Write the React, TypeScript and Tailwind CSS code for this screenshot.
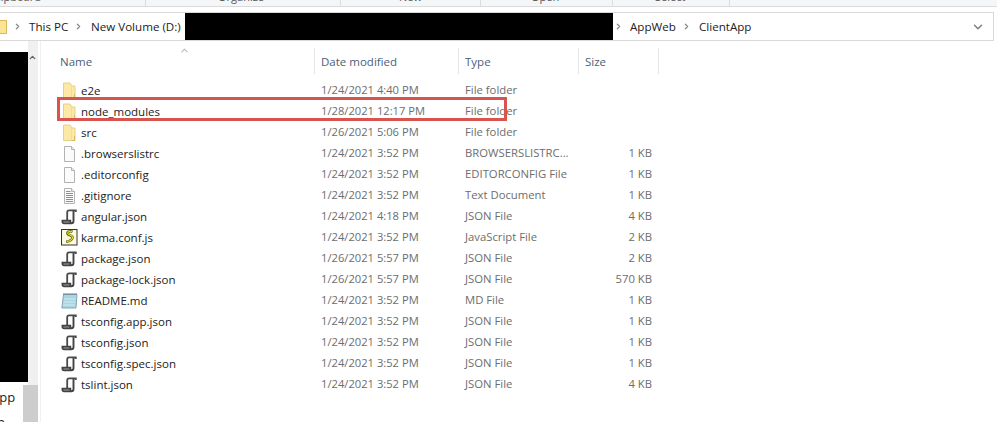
import { ChevronDown, ChevronRight, ChevronUp } from 'lucide-react';

type Kind = 'folder' | 'blank' | 'text' | 'json' | 'js' | 'md';

interface Row {
  name: string;
  date: string;
  type: string;
  size?: string;
  kind: Kind;
}

const rows: Row[] = [
  { name: 'e2e', date: '1/24/2021 4:40 PM', type: 'File folder', kind: 'folder' },
  { name: 'node_modules', date: '1/28/2021 12:17 PM', type: 'File folder', kind: 'folder' },
  { name: 'src', date: '1/26/2021 5:06 PM', type: 'File folder', kind: 'folder' },
  { name: '.browserslistrc', date: '1/24/2021 3:52 PM', type: 'BROWSERSLISTRC...', size: '1 KB', kind: 'blank' },
  { name: '.editorconfig', date: '1/24/2021 3:52 PM', type: 'EDITORCONFIG File', size: '1 KB', kind: 'blank' },
  { name: '.gitignore', date: '1/24/2021 3:52 PM', type: 'Text Document', size: '1 KB', kind: 'text' },
  { name: 'angular.json', date: '1/24/2021 4:18 PM', type: 'JSON File', size: '4 KB', kind: 'json' },
  { name: 'karma.conf.js', date: '1/24/2021 3:52 PM', type: 'JavaScript File', size: '2 KB', kind: 'js' },
  { name: 'package.json', date: '1/26/2021 5:57 PM', type: 'JSON File', size: '2 KB', kind: 'json' },
  { name: 'package-lock.json', date: '1/26/2021 5:57 PM', type: 'JSON File', size: '570 KB', kind: 'json' },
  { name: 'README.md', date: '1/24/2021 3:52 PM', type: 'MD File', size: '1 KB', kind: 'md' },
  { name: 'tsconfig.app.json', date: '1/24/2021 3:52 PM', type: 'JSON File', size: '1 KB', kind: 'json' },
  { name: 'tsconfig.json', date: '1/24/2021 3:52 PM', type: 'JSON File', size: '1 KB', kind: 'json' },
  { name: 'tsconfig.spec.json', date: '1/24/2021 3:52 PM', type: 'JSON File', size: '1 KB', kind: 'json' },
  { name: 'tslint.json', date: '1/24/2021 3:52 PM', type: 'JSON File', size: '4 KB', kind: 'json' },
];

function FileIcon({ kind }: { kind: Kind }) {
  if (kind === 'folder') {
    return (
      <svg width="16" height="17" viewBox="0 0 16 17">
        <path d="M2.500 1h6.500l2 3h3v12.500h-11.500z" fill="#fce9a6" stroke="#e8d08a" />
        <path d="M10.500 4.500v12" stroke="#f3dc92" />
        <path d="M13.500 12v4.500h-3" fill="none" stroke="#dcb95e" />
      </svg>
    );
  }
  if (kind === 'blank' || kind === 'text') {
    return (
      <svg width="16" height="17" viewBox="0 0 16 17">
        <path d="M3.500 1.500h7l3 3v12h-10z" fill="#fbfbfb" stroke="#b3b3b3" />
        <path d="M10.500 1.500v3h3" fill="#ececec" stroke="#b3b3b3" />
        {kind === 'text' && (
          <path d="M5 4.500h4.500M5 6.500h7M5 8.500h7M5 10.500h7M5 12.500h7M5 14.500h7" stroke="#8f8f8f" />
        )}
      </svg>
    );
  }
  if (kind === 'json') {
    return (
      <svg width="16" height="17" viewBox="0 0 16 17">
        <path d="M14.800 4V2.300H8.200C6.800 2.300 6.200 3.200 6.200 4.300V12" fill="none" stroke="#4a4a4a" strokeWidth="1.800" />
        <path d="M12.500 2.800V13C12.500 14.500 11.600 15.300 10.300 15.300H3C2 15.300 1.500 14.600 1.500 13.800V12.700H9.300V14.400" fill="none" stroke="#434343" strokeWidth="1.900" />
      </svg>
    );
  }
  if (kind === 'js') {
    return (
      <svg width="17" height="17" viewBox="0 0 17 17">
        <rect x="0.500" y="0.500" width="15.500" height="15.500" fill="#fbf9df" stroke="#333" />
        <path d="M11.500 2.800c-3-1.300-6 .4-4.800 2.300 1 1.400 4.300 1 4.800 3 .4 2.100-2.200 4.300-6.300 4.700" fill="none" stroke="#5f6a10" strokeWidth="2.600" />
        <path d="M11 2.600c-2.500-1-5 .5-4 2.200 1 1.400 4 1.300 4.500 3.300.4 1.900-2 4-5.500 4.300" fill="none" stroke="#eadf2e" strokeWidth="1.100" />
      </svg>
    );
  }
  return (
    <svg width="17" height="17" viewBox="0 0 17 17">
      <path d="M2.500 2.500h13.500l-1 13.500H0.800z" fill="#a9d5e2" stroke="#7fa9b8" />
      <path d="M3 3.500h12.500M3 7h11.500M2.600 10h11.500M2.200 13h11.500" stroke="#d3ebf1" />
      <path d="M3 1v2.500M5 1v2.500M7 1v2.500M9 1v2.500M11 1v2.500M13 1v2.500M15 1v2.500" stroke="#6d7f88" />
    </svg>
  );
}

function Crumb({ label, className }: { label: string; className?: string }) {
  return (
    <>
      <ChevronRight size={9} strokeWidth={3.5} className="shrink-0 text-[#8c8c8c]" />
      <span className={`whitespace-nowrap text-[11.6px] text-[#222] ${className ?? ''}`}>{label}</span>
    </>
  );
}

function RibbonGroup({ label, width, pad }: { label: string; width: string; pad: string }) {
  return (
    <div className={`h-full shrink-0 overflow-hidden border-r border-[#dcdddd] ${width} ${pad}`}>
      <div className="-mt-[10px] whitespace-nowrap text-[11px] leading-[14px] text-[#555]">{label}</div>
    </div>
  );
}

export default function App() {
  return (
    <div className="relative flex h-[422px] w-[997px] flex-col overflow-hidden bg-white font-['Open_Sans','Liberation_Sans',sans-serif]">
      {/* cropped ribbon */}
      <div className="flex h-[7px] shrink-0 border-b border-[#dadbdc] bg-[#f5f6f7]">
        <RibbonGroup label="Clipboard" width="w-[146px]" pad="-indent-[9px]" />
        <RibbonGroup label="Organize" width="w-[195px]" pad="pl-[72px]" />
        <RibbonGroup label="New" width="w-[140px]" pad="pl-[58px]" />
        <RibbonGroup label="Open" width="w-[132px]" pad="pl-[50px]" />
        <RibbonGroup label="Select" width="w-[117px]" pad="pl-[42px]" />
      </div>

      {/* address bar */}
      <div className="mt-[5px] flex h-[29px] w-[994px] shrink-0 items-center border border-l-0 border-[#d9d9d9]">
        <div className="h-[14px] w-[7px] shrink-0 rounded-r-[1px] border border-l-0 border-[#dcb95e] bg-[#fbe594]" />
        <div className="ml-[6px] flex items-center">
          <Crumb label="This PC" className="ml-[7px] w-[45px]" />
          <Crumb label="New Volume (D:)" className="ml-[8px] w-[94px]" />
        </div>
        <div className="h-[27px] w-[428px] shrink-0 bg-black" />
        <div className="ml-[1px] flex items-center">
          <Crumb label="AppWeb" className="ml-[7px] w-[52px]" />
          <Crumb label="ClientApp" className="ml-[8px]" />
        </div>
        <ChevronDown size={14} strokeWidth={2.500} className="ml-auto mr-[8px] text-[#7f7f7f]" />
      </div>

      <div className="flex min-h-0 flex-1">
        {/* navigation pane */}
        <div className="relative w-[41px] shrink-0 border-r border-[#f0f0f0]">
          <div className="flex h-full pt-[11px]">
            <div className="flex w-[28px] flex-col">
              <div className="h-[330px] shrink-0 bg-black" />
              <div className="mt-[3px] shrink-0 text-[13px] leading-[25px] text-[#222]">
                <div className="-ml-[9px]">App</div>
                <div className="-ml-[3px]">n</div>
              </div>
            </div>
            <div className="-mt-[11px] flex w-[10px] justify-start bg-[#f0f0f0] pt-[12px]">
              <ChevronUp size={9} strokeWidth={3.500} className="text-[#606060]" />
            </div>
          </div>
          <div className="absolute left-[23px] top-[344px] h-[40px] w-[15px] bg-[#cdcdcd]" />
        </div>

        {/* file list */}
        <div className="min-w-0 flex-1 pt-[7px]">
          <div className="relative flex h-[26px] w-[618px] text-[11.500px] text-[#4c607a]">
            <ChevronUp size={11} strokeWidth={1.500} className="absolute left-[138px] -top-[3px] text-[#666]" />
            <div className="flex w-[274px] items-center border-r border-[#e5e5e5] pl-[19px] pt-[2px]">Name</div>
            <div className="flex w-[144px] items-center border-r border-[#e5e5e5] pl-[6px] pt-[2px]">Date modified</div>
            <div className="flex w-[120px] items-center border-r border-[#e5e5e5] pl-[6px] pt-[2px]">Type</div>
            <div className="flex w-[80px] items-center border-r border-[#e5e5e5] pl-[6px] pt-[2px]">Size</div>
          </div>
          <div className="pt-[6px]">
            {rows.map((row) => (
              <div key={row.name} className="flex h-[21px] w-[618px] items-center text-[11.300px] text-[#6d6d6d]">
                <div className="flex w-[274px] items-center pl-[20px]">
                  <span className="flex w-[20px] shrink-0 justify-start">
                    <FileIcon kind={row.kind} />
                  </span>
                  <span className="text-[11.500px] text-[#222]">{row.name}</span>
                </div>
                <div className="w-[144px] pl-[6px] text-[11.200px]">{row.date}</div>
                <div className="w-[120px] pl-[6px]">{row.type}</div>
                <div className="w-[73px] text-right">{row.size}</div>
              </div>
            ))}
          </div>
        </div>
      </div>

      {/* red highlight drawn over the screenshot */}
      <div className="absolute left-[57px] top-[97px] h-[24px] w-[450px] border-[3px] border-[#d9534f]" />
    </div>
  );
}
